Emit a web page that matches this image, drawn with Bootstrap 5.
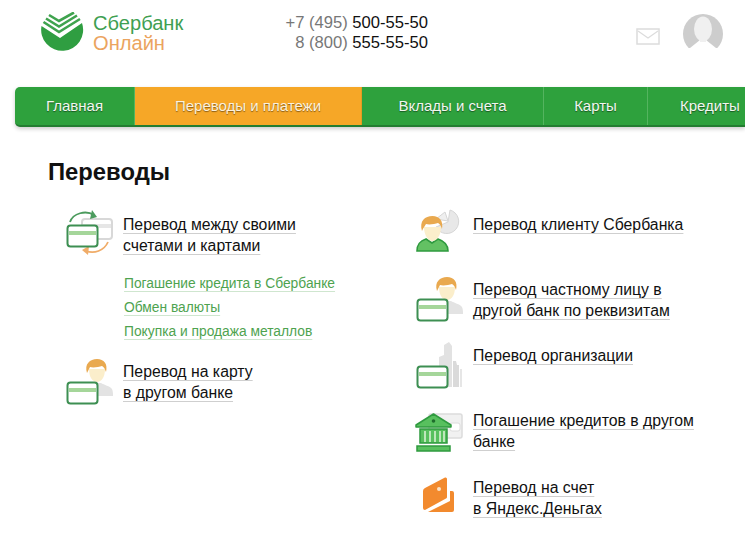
<!DOCTYPE html>
<html lang="ru"><head><meta charset="utf-8"><title>Сбербанк Онлайн</title>
<link href="https://cdn.jsdelivr.net/npm/bootstrap@5.3.0/dist/css/bootstrap.min.css" rel="stylesheet">
<style>
html,body{height:559px;overflow:hidden;background:#fff}
body{font-family:"Liberation Sans",Arial,sans-serif;color:#111}
.sprite{position:absolute;width:0;height:0}
.top-head{height:87px}
.logo-wrap{margin-left:41px;width:243px;padding-top:12px}
.logo-text{font-size:20.1px;line-height:19.500px;margin-left:8px;padding-top:2px}
.logo-g{color:#3f9f52}.logo-o{color:#eba45f}
.phones{width:144px;text-align:right;font-size:16.6px;line-height:19.5px;padding-top:13px;color:#777}
.phones b{font-weight:400;color:#111}
.head-ico{margin-left:208px;padding-top:14px;gap:23px}
.env{margin-top:14px}
.main-nav{margin-left:15px;width:730px;height:40px;border-radius:5px 0 0 5px;background:#2ea13d;border-bottom:2px solid #237d31;box-shadow:0 2px 4px rgba(0,0,0,.2);overflow:hidden;flex-wrap:nowrap}
.main-nav .nav-link{color:#f2f7f0;font-size:15px;height:38px;line-height:38px;padding:0;text-align:center;text-shadow:0 1px 1px rgba(0,0,0,.45);border-right:1px solid #54b45f;flex:none}
.main-nav .nav-link.is-on{background:#f6a727;border-right-color:#e69a22;color:#fdf1dd}
.w1{width:120px}.w2{width:227px}.w3{width:182px}.w4{width:104px}
.main-nav .nav-link.w5{width:97px;text-align:left;padding-left:32px;border-right:0}
.page-title{font-size:23.8px;font-weight:700;margin:31px 0 0 48px;line-height:28px}
.cols{margin-top:28px}
.col-l{margin-left:65px;width:350px}
.row-item{display:flex;height:66px}
.row-top{height:42px}
.h65{height:65px}.h67{height:67px}
.row-l2{margin-top:11px}
.row-item svg{width:50px;height:50px;margin-top:-6px;margin-right:8px;flex:none;overflow:visible}
.row-txt{font-size:15.8px;line-height:21px}
.row-txt a,.sub-links a{text-decoration:underline;text-underline-offset:3px;text-decoration-thickness:1px}
.row-txt a{color:#111;text-decoration-color:#cfcfcf}
.sub-links{margin:16px 0 0 59px;height:78px;font-size:13.8px;line-height:24px}
.sub-links a{color:#4ea34f;text-decoration-color:#cfe6cf}
</style></head><body>
<svg class="sprite">
<defs>
<g id="ccard"><rect x="2.500" y="0.500" width="30" height="21" rx="3" fill="#fff" stroke="#3d8f52" stroke-width="2"/><rect x="4" y="6" width="27" height="4" fill="#a5d69a"/></g>
<g id="phead"><path d="M22 35c1-4 6-5 8-7h6c3 2 9 3 11 6 1 2 1 5 1 7H22z" fill="#e3e3e3"/><path d="M24 14c0 8 3.500 13 8 13s8-5 8-13z" fill="#fbeecb"/><path d="M22 18c-3-9 3-14 10-14 7 0 11 5 9 13-1-3-2-5-4-6-3 1-9 2-12 1-1 2-2 4-3 6z" fill="#e9a94f"/></g>
</defs></svg>

<div class="top-head d-flex">
  <div class="logo-wrap d-flex">
    <svg width="44" height="42" viewBox="0 0 44 42"><path d="M0.500 14L19 26 41 11A21 21 0 1 1 0.500 14Z" fill="#2f9e41"/><g fill="none" stroke="#3fa34e" stroke-width="2.600"><path d="M8 3 18 9 33 0.500"/><path d="M5 6.500 18 14.500 36 3.500"/><path d="M2.500 10 18 20 39 7"/></g></svg>
    <div class="logo-text"><div class="logo-g">Сбербанк</div><div class="logo-o">Онлайн</div></div>
  </div>
  <div class="phones"><div>+7 (495) <b>500-55-50</b></div><div>8 (800) <b>555-55-50</b></div></div>
  <div class="head-ico d-flex align-items-start">
    <svg class="env" width="24" height="18" viewBox="0 0 24 18"><rect x="1" y="1" width="22" height="15" fill="#fff" stroke="#dcdcdc" stroke-width="1.500"/><path d="M2 3l10 7 10-7" fill="none" stroke="#dcdcdc" stroke-width="1.200"/></svg>
    <svg width="40" height="40" viewBox="0 0 40 40"><circle cx="20" cy="20" r="20" fill="#cdcdcd"/><ellipse cx="20" cy="15" rx="9" ry="12.500" fill="#f0f0f0"/><path d="M0 40V34L7 34 17 26H23L33 34H40V40Z" fill="#fff"/><path d="M17 20h6v8h-6z" fill="#f0f0f0"/></svg>
  </div>
</div>

<nav class="nav main-nav">
  <a class="nav-link w1" href="#">Главная</a>
  <a class="nav-link w2 is-on" href="#">Переводы и платежи</a>
  <a class="nav-link w3" href="#">Вклады и счета</a>
  <a class="nav-link w4" href="#">Карты</a>
  <a class="nav-link w5" href="#">Кредиты</a>
</nav>

<h1 class="page-title">Переводы</h1>

<div class="cols d-flex">
  <div class="col-l">
    <div class="row-item row-top">
      <svg viewBox="0 0 50 50">
        <rect x="17" y="11" width="30" height="20" rx="3" fill="#fff" stroke="#d8d8d8" stroke-width="2"/><rect x="18" y="16" width="28" height="4" fill="#e6e6e6"/>
        <path d="M5 14C8 5 21 2 29 7" fill="none" stroke="#4b9b5d" stroke-width="1.800"/><path d="M27 2l5 7-7 2" fill="#4b9b5d"/>
        <path d="M43 34C39 43 29 46 21 43" fill="none" stroke="#f0ac68" stroke-width="1.800"/><path d="M24 38l-7 4 6 5z" fill="#f0ac68"/>
        <use href="#ccard" x="0" y="17"/>
      </svg>
      <div class="row-txt"><a href="#">Перевод между своими</a><br><a href="#">счетами и картами</a></div>
    </div>
    <div class="sub-links"><a href="#">Погашение кредита в Сбербанке</a><br><a href="#">Обмен валюты</a><br><a href="#">Покупка и продажа металлов</a></div>
    <div class="row-item row-l2">
      <svg viewBox="0 0 50 50"><use href="#phead"/><use href="#ccard" x="0" y="27"/></svg>
      <div class="row-txt"><a href="#">Перевод на карту</a><br><a href="#">в другом банке</a></div>
    </div>
  </div>
  <div class="col-r">
    <div class="row-item h65">
      <svg viewBox="0 0 50 50">
        <path d="M35 2a12 12 0 1 1-14 17l12-5z" fill="#e8e8e8" stroke="#d6d6d6"/><path d="M21 11l12 2-3-9z" fill="#efefef" stroke="#d6d6d6"/>
        <path d="M2 43c0-7 3-10 9-12l6 4 6-4c6 2 10 5 10 12z" fill="#63c163" stroke="#2f9a3f" stroke-width="1.600"/>
        <path d="M9 19c0 8 4 14 8.500 14S26 27 26 19z" fill="#fbeecb"/><path d="M7 23c-3-10 3-15 10.500-15 7 0 11 5 9.500 13-1-3-2-5-4-6-3 1-9 2-12 1-1 2-3 4-4 7z" fill="#e9a94f"/>
      </svg>
      <div class="row-txt"><a href="#">Перевод клиенту Сбербанка</a></div>
    </div>
    <div class="row-item">
      <svg viewBox="0 0 50 50"><use href="#phead"/><use href="#ccard" x="0" y="26"/></svg>
      <div class="row-txt"><a href="#">Перевод частному лицу в</a><br><a href="#">другой банк по реквизитам</a></div>
    </div>
    <div class="row-item h65">
      <svg viewBox="0 0 50 50">
        <path d="M24 48V18l5-2V6l5-3 3 4v41z" fill="#e2e2e2"/><path d="M38 48V22h3l1 4h2v22z" fill="#dadada"/><path d="M45 48V30h2v18z" fill="#e6e6e6"/>
        <use href="#ccard" x="0" y="27"/>
      </svg>
      <div class="row-txt"><a href="#">Перевод организации</a></div>
    </div>
    <div class="row-item h67">
      <svg viewBox="0 0 50 50">
        <rect x="14" y="10" width="33" height="24" rx="2" fill="#f1f1f1" stroke="#dcdcdc" stroke-width="1.500"/><rect x="35" y="19" width="10" height="8" rx="2" fill="#fff" stroke="#dcdcdc"/>
        <path d="M18.500 10 36 21v2H1v-2z" fill="#58c05e" stroke="#2f9a3f" stroke-width="1.500" stroke-linejoin="round"/><circle cx="18.500" cy="17" r="1.800" fill="#1f6d2d"/>
        <path d="M5 25h27v14H5z" fill="#58c05e" stroke="#2f9a3f" stroke-width="1.500"/><path d="M10 27v11M15 27v11M20 27v11M25 27v11M29 27v11" stroke="#d7f0d2" stroke-width="1.600"/>
        <path d="M2 42h33v5H2z" fill="#58c05e" stroke="#2f9a3f" stroke-width="1.500"/>
      </svg>
      <div class="row-txt"><a href="#">Погашение кредитов в другом</a><br><a href="#">банке</a></div>
    </div>
    <div class="row-item">
      <svg viewBox="0 0 50 50">
        <path d="M8 20Q8 18 10 17L30 6.500Q32 6 32 8V26Q32 27 31 27.500L10 39Q8 39 8 37Z" fill="#f28a2e"/><path d="M35 20H37Q39 20 39 22V39Q39 41 37 41H13L35 30Z" fill="#f28a2e"/><circle cx="24" cy="18" r="2" fill="#fce3c6"/>
      </svg>
      <div class="row-txt"><a href="#">Перевод на счет</a><br><a href="#">в Яндекс.Деньгах</a></div>
    </div>
  </div>
</div>
</body></html>
